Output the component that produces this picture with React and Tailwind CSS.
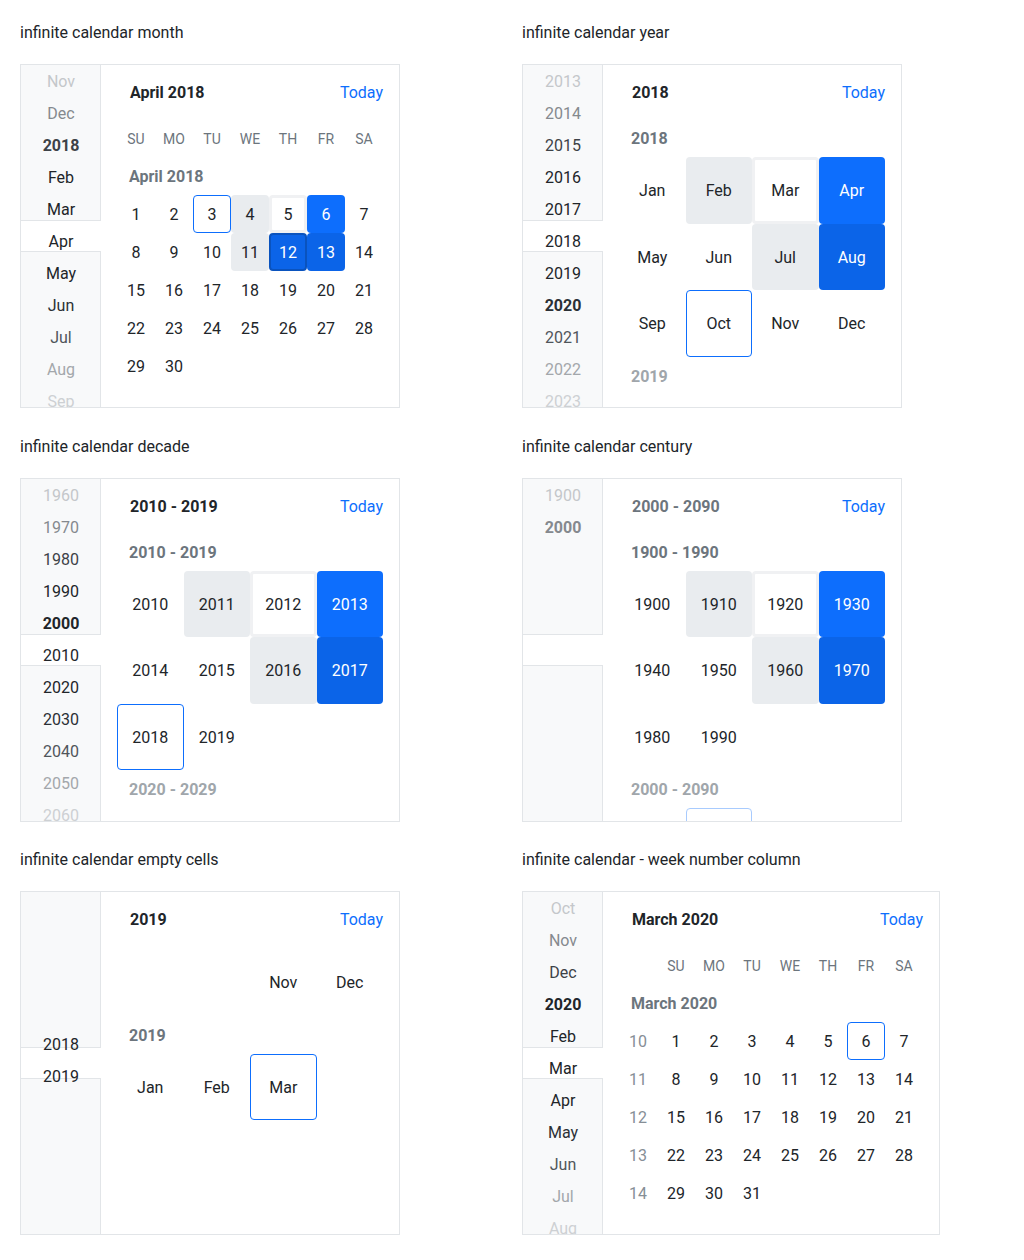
import React from 'react';

const FADE = [
  'text-[#c4c7ca]',
  'text-[#85898e]',
  'text-[#3d4247]',
  'text-[#212529]',
  'text-[#212529]',
  'text-[#212529]',
  'text-[#212529]',
  'text-[#2b3035]',
  'text-[#50555a]',
  'text-[#a3a7ab]',
  'text-[#cdd0d3]',
];

const STATE = {
  none: 'text-[#212529]',
  hover: 'bg-[#e9ecef] rounded-[4px] text-[#212529]',
  ring: 'border-[3px] border-[#f0f1f3] rounded-[4px] text-[#212529]',
  sel: 'bg-[#0d6efd] rounded-[4px] text-white',
  sel2: 'bg-[#0b64e8] rounded-[4px] text-white',
  act: 'bg-[#0b64e8] border-2 border-[#0a53be] rounded-[4px] text-white',
  focus: 'border border-[#0d6efd] rounded-[4px] text-[#212529]',
  ghost: 'border border-[#a8cbfe] rounded-[4px]',
};

function Sidebar({ items, top = 0 }) {
  return (
    <div className="relative w-[80px] shrink-0">
      <div className="flex h-full flex-col">
        <div className="h-[156px] border-r border-b border-[#e2e5e8] bg-[#f8f9fa]" />
        <div className="h-[30px] bg-white" />
        <div className="flex-1 border-r border-t border-[#e2e5e8] bg-[#f8f9fa]" />
      </div>
      <div className="absolute inset-0 flex flex-col" style={top ? { paddingTop: top } : undefined}>
        {items.map((it, i) => {
          const bold = it.startsWith('*');
          return (
            <div
              key={i}
              className={`flex h-[32px] shrink-0 items-center justify-center pt-[2px] text-[16px] ${bold ? 'font-bold' : ''} ${FADE[i] || FADE[3]}`}
            >
              {bold ? it.slice(1) : it}
            </div>
          );
        })}
      </div>
    </div>
  );
}

function Header({ title, muted }) {
  return (
    <div className="flex h-[54px] items-center justify-between pl-[13px] pt-[2px]">
      <span className={`text-[16px] font-bold ${muted ? 'text-[#6c757d]' : 'text-[#212529]'}`}>{title}</span>
      <span className="text-[16px] text-[#0d6efd]">Today</span>
    </div>
  );
}

function Label({ children, light }) {
  return (
    <div className={`flex h-[38px] items-center pl-[12px] pt-[2px] text-[16px] font-bold ${light ? 'text-[#a0a6ab]' : 'text-[#6c757d]'}`}>
      {children}
    </div>
  );
}

function Cell({ c, tall }) {
  const [v, s = 'none'] = Array.isArray(c) ? c : [c];
  return (
    <div className={`flex ${tall ? 'h-[66.5px]' : 'h-[38px]'} items-center justify-center pt-[2px] text-[16px] ${STATE[s]}`}>
      {v}
    </div>
  );
}

function DayRow({ cells }) {
  return (
    <div className="grid grid-cols-7">
      {cells.map((c, i) => (
        <Cell key={i} c={c} />
      ))}
    </div>
  );
}

function BigRow({ cells }) {
  return (
    <div className="grid grid-cols-4">
      {cells.map((c, i) => (
        <Cell key={i} c={c} tall />
      ))}
    </div>
  );
}

function Weekdays({ week }) {
  const days = ['SU', 'MO', 'TU', 'WE', 'TH', 'FR', 'SA'];
  return (
    <div className={`grid ${week ? 'grid-cols-8' : 'grid-cols-7'} h-[38px] items-center pt-[2px] text-[14px] text-[#6c757d]`}>
      {week && <span />}
      {days.map((d) => (
        <span key={d} className="text-center">{d}</span>
      ))}
    </div>
  );
}

function Box({ wide, children }) {
  return (
    <div className={`flex h-[344px] ${wide ? 'w-[418px]' : 'w-[380px]'} overflow-hidden border border-[#e2e5e8] bg-white`}>
      {children}
    </div>
  );
}

function Section({ title, children }) {
  return (
    <div className="flex flex-col">
      <div className="mb-5 h-6 pt-px text-[16px] leading-6 text-[#212529]">{title}</div>
      {children}
    </div>
  );
}

function MonthCal() {
  return (
    <Box>
      <Sidebar items={['Nov', 'Dec', '*2018', 'Feb', 'Mar', 'Apr', 'May', 'Jun', 'Jul', 'Aug', 'Sep']} />
      <div className="flex-1 px-4">
        <Header title="April 2018" />
        <Weekdays />
        <Label>April 2018</Label>
        <DayRow cells={[1, 2, [3, 'focus'], [4, 'hover'], [5, 'ring'], [6, 'sel'], 7]} />
        <DayRow cells={[8, 9, 10, [11, 'hover'], [12, 'act'], [13, 'sel2'], 14]} />
        <DayRow cells={[15, 16, 17, 18, 19, 20, 21]} />
        <DayRow cells={[22, 23, 24, 25, 26, 27, 28]} />
        <DayRow cells={[29, 30, '', '', '', '', '']} />
      </div>
    </Box>
  );
}

function YearCal() {
  return (
    <Box>
      <Sidebar items={['2013', '2014', '2015', '2016', '2017', '2018', '2019', '*2020', '2021', '2022', '2023']} />
      <div className="flex-1 px-4">
        <Header title="2018" />
        <Label>2018</Label>
        <BigRow cells={['Jan', ['Feb', 'hover'], ['Mar', 'ring'], ['Apr', 'sel']]} />
        <BigRow cells={['May', 'Jun', ['Jul', 'hover'], ['Aug', 'sel2']]} />
        <BigRow cells={['Sep', ['Oct', 'focus'], 'Nov', 'Dec']} />
        <Label light>2019</Label>
      </div>
    </Box>
  );
}

function DecadeCal() {
  return (
    <Box>
      <Sidebar items={['1960', '1970', '1980', '1990', '*2000', '2010', '2020', '2030', '2040', '2050', '2060']} />
      <div className="flex-1 px-4">
        <Header title="2010 - 2019" />
        <Label>2010 - 2019</Label>
        <BigRow cells={['2010', ['2011', 'hover'], ['2012', 'ring'], ['2013', 'sel']]} />
        <BigRow cells={['2014', '2015', ['2016', 'hover'], ['2017', 'sel2']]} />
        <BigRow cells={[['2018', 'focus'], '2019', '', '']} />
        <Label light>2020 - 2029</Label>
      </div>
    </Box>
  );
}

function CenturyCal() {
  return (
    <Box>
      <Sidebar items={['1900', '*2000']} />
      <div className="flex-1 px-4">
        <Header title="2000 - 2090" muted />
        <Label>1900 - 1990</Label>
        <BigRow cells={['1900', ['1910', 'hover'], ['1920', 'ring'], ['1930', 'sel']]} />
        <BigRow cells={['1940', '1950', ['1960', 'hover'], ['1970', 'sel2']]} />
        <BigRow cells={['1980', '1990', '', '']} />
        <Label light>2000 - 2090</Label>
        <BigRow cells={['', ['', 'ghost'], '', '']} />
      </div>
    </Box>
  );
}

function EmptyCal() {
  return (
    <Box>
      <Sidebar items={['', '', '', '', '2018', '2019']} top={8} />
      <div className="flex-1 px-4">
        <Header title="2019" />
        <div className="mt-[3px]">
          <BigRow cells={['', '', 'Nov', 'Dec']} />
        </div>
        <Label>2019</Label>
        <BigRow cells={['Jan', 'Feb', ['Mar', 'focus'], '']} />
      </div>
    </Box>
  );
}

function WeekCal() {
  return (
    <Box wide>
      <Sidebar items={['Oct', 'Nov', 'Dec', '*2020', 'Feb', 'Mar', 'Apr', 'May', 'Jun', 'Jul', 'Aug']} />
      <div className="flex-1 px-4">
        <Header title="March 2020" />
        <Weekdays week />
        <Label>March 2020</Label>
        {[
          ['10', 1, 2, 3, 4, 5, [6, 'focus'], 7],
          ['11', 8, 9, 10, 11, 12, 13, 14],
          ['12', 15, 16, 17, 18, 19, 20, 21],
          ['13', 22, 23, 24, 25, 26, 27, 28],
          ['14', 29, 30, 31, '', '', '', ''],
        ].map((row, i) => (
          <div key={i} className="grid grid-cols-8">
            <div className="flex h-[38px] items-center justify-center pt-[2px] text-[16px] text-[#868e96]">{row[0]}</div>
            {row.slice(1).map((c, j) => (
              <Cell key={j} c={c} />
            ))}
          </div>
        ))}
      </div>
    </Box>
  );
}

export default function App() {
  return (
    <div className="min-h-[1260px] bg-white pl-5 pt-5 font-['Roboto','Liberation_Sans',sans-serif] text-[#212529]">
      <div className="grid grid-cols-[502px_1fr] gap-y-[25.5px]">
        <Section title="infinite calendar month"><MonthCal /></Section>
        <Section title="infinite calendar year"><YearCal /></Section>
        <Section title="infinite calendar decade"><DecadeCal /></Section>
        <Section title="infinite calendar century"><CenturyCal /></Section>
        <Section title="infinite calendar empty cells"><EmptyCal /></Section>
        <Section title="infinite calendar - week number column"><WeekCal /></Section>
      </div>
    </div>
  );
}
